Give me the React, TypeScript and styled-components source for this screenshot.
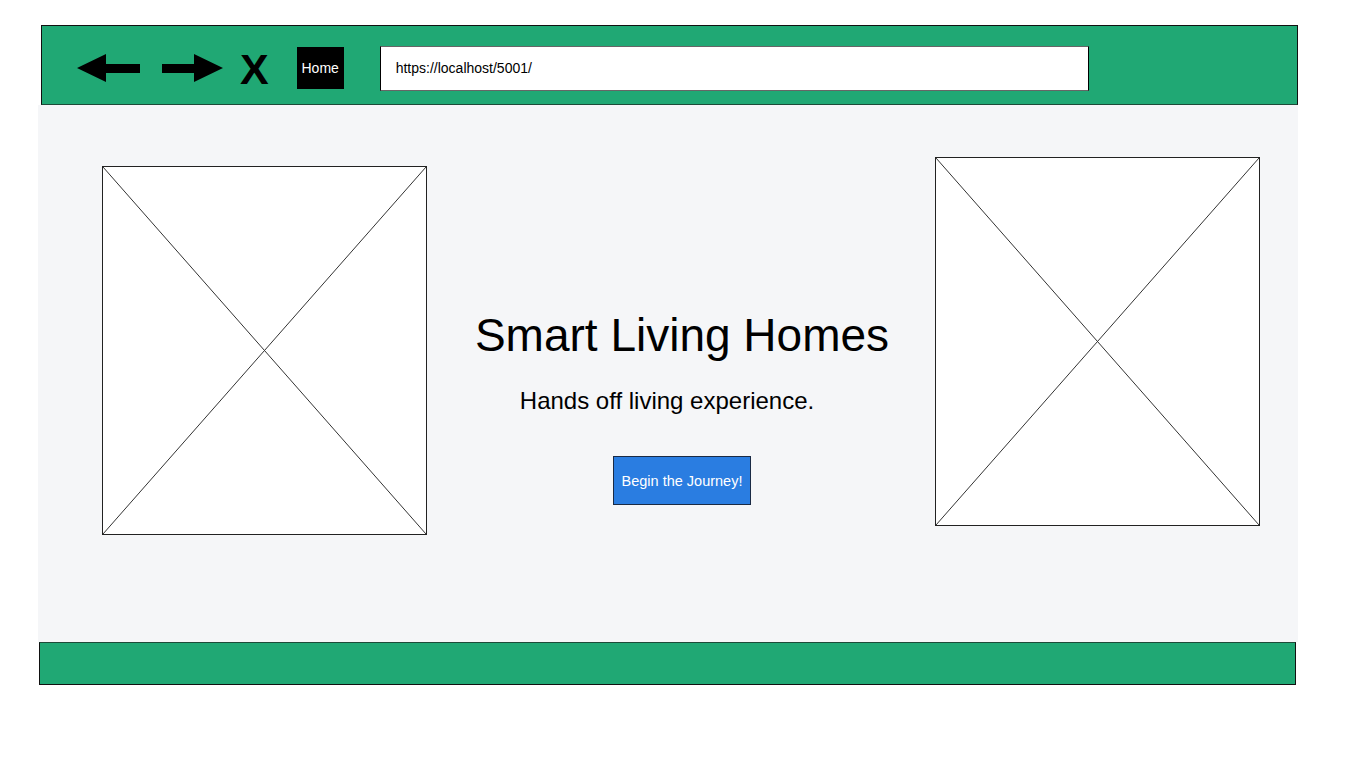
import styled, { createGlobalStyle } from 'styled-components';

const GREEN = '#20a874';
const PAGE_GRAY = '#f5f6f8';

const GlobalStyle = createGlobalStyle`
    html, body {
        margin: 0;
        padding: 0;
        background: #ffffff;
        font-family: "Liberation Sans", Arial, sans-serif;
    }
`

const Frame = styled.div`
    display: flex;
    flex-direction: column;
    padding-top: 25px;
`

const Header = styled.header`
    box-sizing: border-box;
    margin-left: 41px;
    width: 1257px;
    height: 80px;
    background-color: ${GREEN};
    border: 1px solid #111;
    border-bottom-color: #1d4a38;
    display: flex;
    flex-direction: row;
    align-items: center;
    padding: 6px 0 0 35px;
`

const NavIcon = styled.svg<{ $gap: number }>`
    display: block;
    margin-right: ${p => p.$gap}px;
    flex-shrink: 0;
`

const CloseGlyph = styled.span`
    font-family: "Liberation Sans", Arial, sans-serif;
    font-weight: 700;
    font-size: 43px;
    line-height: 1;
    color: #000;
    margin-right: 28px;
    margin-top: 2px;
`

const HomeButton = styled.button`
    border: 0;
    width: 47px;
    height: 42px;
    padding: 0;
    background-color: #000;
    color: #fff;
    font-family: "Liberation Sans", Arial, sans-serif;
    font-size: 14px;
    margin-right: 36px;
    cursor: pointer;
`

const UrlBar = styled.div`
    box-sizing: border-box;
    width: 709px;
    height: 45px;
    background-color: #fff;
    border: 1px solid #666;
    border-left-color: #000;
    border-right-color: #000;
    padding-left: 15px;
    display: flex;
    align-items: center;
    font-size: 14px;
    color: #000;
`

const Main = styled.main`
    box-sizing: border-box;
    margin-left: 38px;
    width: 1260px;
    height: 537px;
    background-color: ${PAGE_GRAY};
    display: flex;
    flex-direction: row;
    align-items: flex-start;
    padding: 0 38px 0 64px;
`

const Placeholder = styled.div<{ $top: number }>`
    box-sizing: border-box;
    width: 325px;
    height: 369px;
    margin-top: ${p => p.$top}px;
    background-color: #fff;
    border: 1px solid #222;
    flex-shrink: 0;

    svg {
        display: block;
        width: 100%;
        height: 100%;
    }
`

const Hero = styled.section`
    flex: 1;
    display: flex;
    flex-direction: column;
    align-items: center;
    padding-top: 207px;
`

const Title = styled.h1`
    margin: 0 0 0 2px;
    font-family: "Liberation Sans", Arial, sans-serif;
    font-weight: 400;
    font-size: 46px;
    line-height: 1;
    color: #000;
`

const Tagline = styled.p`
    margin: 31px 28px 0 0;
    font-family: "Liberation Sans", Arial, sans-serif;
    font-size: 24px;
    line-height: 24px;
    color: #000;
`

const JourneyButton = styled.button`
    box-sizing: border-box;
    margin: 43px 0 0 2px;
    width: 138px;
    height: 49px;
    padding: 0;
    background-color: #2a7de1;
    border: 1px solid #1a2a44;
    color: #fff;
    font-family: "Liberation Sans", Arial, sans-serif;
    font-size: 14.5px;
    cursor: pointer;
`

const Footer = styled.footer`
    box-sizing: border-box;
    margin-left: 39px;
    width: 1257px;
    height: 43px;
    background-color: ${GREEN};
    border: 1px solid #111;
    border-top-color: #1d4a38;
`

const ArrowLeft = () => (
    <NavIcon $gap={21} width="64" height="28" viewBox="0 0 64 28">
        <polygon points="0,14 29,0 29,10 63,10 63,19 29,19 29,28" fill="#000" />
    </NavIcon>
)

const ArrowRight = () => (
    <NavIcon $gap={17} width="61" height="28" viewBox="0 0 61 28">
        <polygon points="61,14 32,0 32,10 0,10 0,19 32,19 32,28" fill="#000" />
    </NavIcon>
)

const ImagePlaceholder = ({ top }: { top: number }) => (
    <Placeholder $top={top}>
        <svg viewBox="0 0 100 100" preserveAspectRatio="none">
            <line x1="0" y1="0" x2="100" y2="100" stroke="#333" strokeWidth="1" vectorEffect="non-scaling-stroke" />
            <line x1="100" y1="0" x2="0" y2="100" stroke="#333" strokeWidth="1" vectorEffect="non-scaling-stroke" />
        </svg>
    </Placeholder>
)

export default function App() {
    return (
        <>
            <GlobalStyle />
            <Frame>
                <Header>
                    <ArrowLeft />
                    <ArrowRight />
                    <CloseGlyph>X</CloseGlyph>
                    <HomeButton>Home</HomeButton>
                    <UrlBar>https://localhost/5001/</UrlBar>
                </Header>
                <Main>
                    <ImagePlaceholder top={61} />
                    <Hero>
                        <Title>Smart Living Homes</Title>
                        <Tagline>Hands off living experience.</Tagline>
                        <JourneyButton>Begin the Journey!</JourneyButton>
                    </Hero>
                    <ImagePlaceholder top={52} />
                </Main>
                <Footer />
            </Frame>
        </>
    );
}
